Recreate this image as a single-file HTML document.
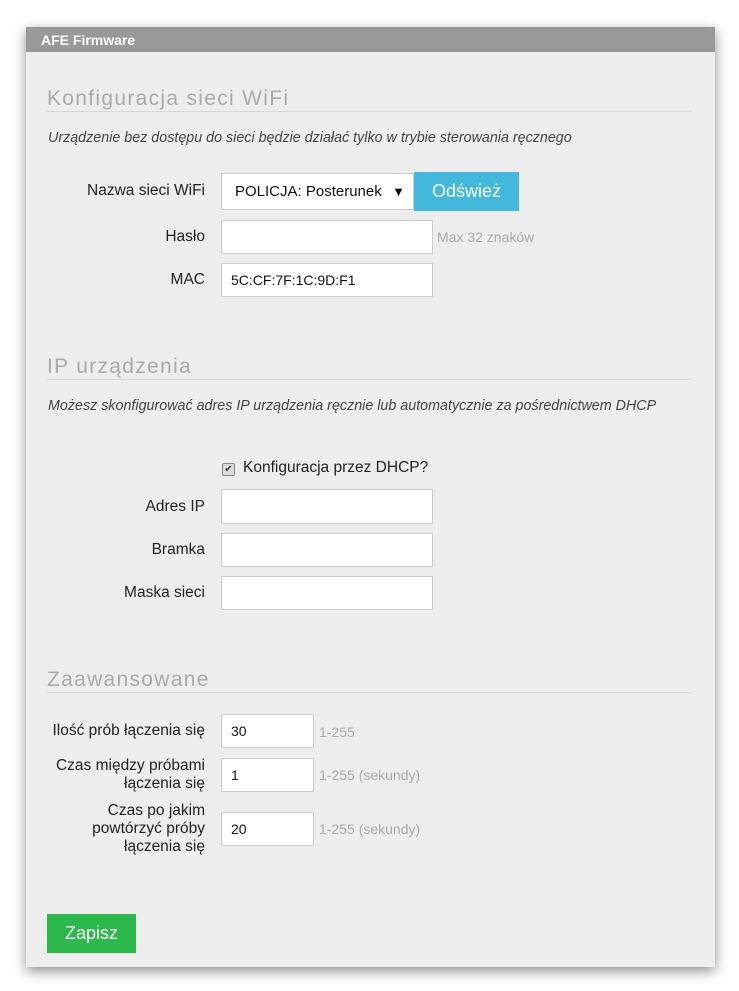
<!DOCTYPE html>
<html><head><meta charset="utf-8"><style>
body{margin:0;width:739px;height:991px;background:#fff;font-family:"Liberation Sans",sans-serif;position:relative;overflow:hidden}
.panel{position:absolute;left:26px;top:27px;width:689px;height:940px;background:#ededed;box-shadow:0 4px 12px rgba(0,0,0,.45)}
.hdr{position:absolute;left:26px;top:27px;width:689px;height:25px;background:#999;color:#fff;font-weight:bold;font-size:14px;line-height:26px}
.hdr span{margin-left:15px}
.a{position:absolute}
.h{left:47px;font-size:21px;color:#aaa;letter-spacing:1.3px}
.ln{left:47px;width:645px;height:1px;background:#d8d8d8}
.it{left:48px;font-size:14.3px;font-style:italic;color:#444}
.lb{right:534px;font-size:15.5px;color:#222;text-align:right;line-height:18px;white-space:nowrap}
.in{background:#fff;border:1px solid #ccc;box-sizing:border-box;font-size:14px;color:#111;padding-left:9px}
.hint{font-size:14px;color:#aaa}
</style></head><body>
<div class="panel"></div>
<div class="hdr"><span>AFE Firmware</span></div>

<div class="a h" style="top:87px">Konfiguracja sieci WiFi</div>
<div class="a ln" style="top:111px"></div>
<div class="a it" style="top:130px">Urządzenie bez dostępu do sieci będzie działać tylko w trybie sterowania ręcznego</div>

<div class="a lb" style="top:182px">Nazwa sieci WiFi</div>
<div class="a in" style="left:221px;top:173px;width:193px;height:37px;line-height:35px;padding-left:13px;font-size:15px">POLICJA: Posterunek<span style="position:absolute;right:8px;font-size:13px">▼</span></div>
<div class="a" style="left:414px;top:172px;width:105px;height:39px;background:#42b8dd;color:#fff;font-size:18px;line-height:38px;text-align:center">Odśwież</div>

<div class="a lb" style="top:228px">Hasło</div>
<div class="a in" style="left:221px;top:220px;width:212px;height:34px"></div>
<div class="a hint" style="left:437px;top:229px">Max 32 znaków</div>

<div class="a lb" style="top:271px">MAC</div>
<div class="a in" style="left:221px;top:263px;width:212px;height:34px;line-height:32px">5C:CF:7F:1C:9D:F1</div>

<div class="a h" style="top:355px">IP urządzenia</div>
<div class="a ln" style="top:379px"></div>
<div class="a it" style="top:398px">Możesz skonfigurować adres IP urządzenia ręcznie lub automatycznie za pośrednictwem DHCP</div>

<div class="a" style="left:222px;top:463px;width:11px;height:11px;border:1px solid #888;border-radius:2px;background:#ddd;font-size:10px;line-height:11px;text-align:center;color:#333">✔</div>
<div class="a" style="left:243px;top:459px;font-size:15.5px;color:#222">Konfiguracja przez DHCP?</div>

<div class="a lb" style="top:498px">Adres IP</div>
<div class="a in" style="left:221px;top:489px;width:212px;height:35px"></div>
<div class="a lb" style="top:541px">Bramka</div>
<div class="a in" style="left:221px;top:533px;width:212px;height:34px"></div>
<div class="a lb" style="top:584px">Maska sieci</div>
<div class="a in" style="left:221px;top:576px;width:212px;height:34px"></div>

<div class="a h" style="top:668px">Zaawansowane</div>
<div class="a ln" style="top:692px"></div>

<div class="a lb" style="top:722px">Ilość prób łączenia się</div>
<div class="a in" style="left:221px;top:714px;width:93px;height:34px;line-height:32px">30</div>
<div class="a hint" style="left:319px;top:724px">1-255</div>

<div class="a lb" style="top:757px">Czas między próbami<br>łączenia się</div>
<div class="a in" style="left:221px;top:758px;width:93px;height:34px;line-height:32px">1</div>
<div class="a hint" style="left:319px;top:767px">1-255 (sekundy)</div>

<div class="a lb" style="top:802px">Czas po jakim<br>powtórzyć próby<br>łączenia się</div>
<div class="a in" style="left:221px;top:812px;width:93px;height:34px;line-height:32px">20</div>
<div class="a hint" style="left:319px;top:821px">1-255 (sekundy)</div>

<div class="a" style="left:47px;top:914px;width:89px;height:39px;background:#2db84c;color:#fff;font-size:18px;line-height:38px;text-align:center">Zapisz</div>
</body></html>
